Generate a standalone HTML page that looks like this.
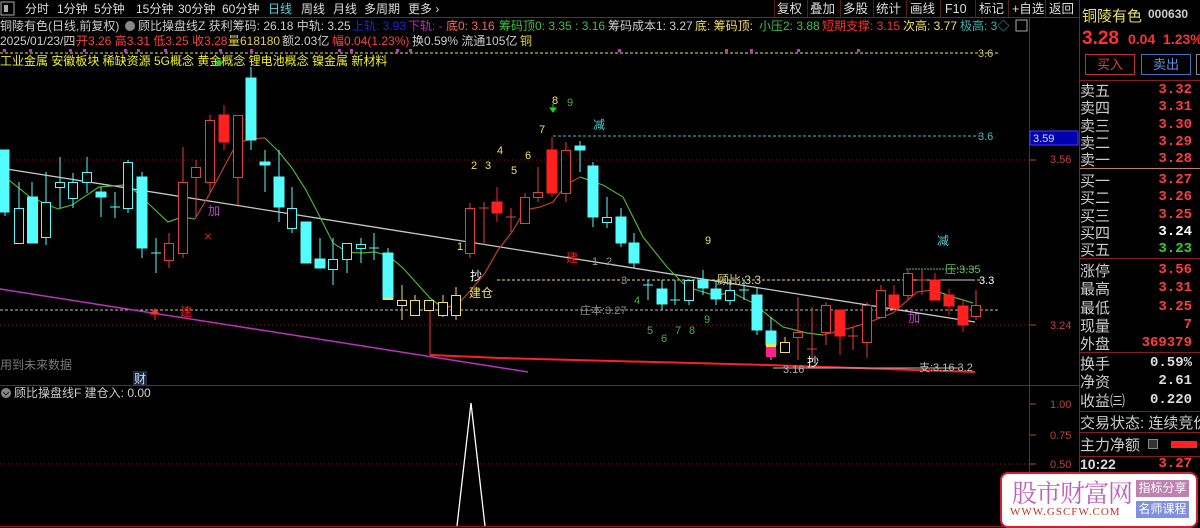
<!DOCTYPE html>
<html><head><meta charset="utf-8"><style>
*{margin:0;padding:0;box-sizing:border-box}
body{width:1200px;height:528px;background:#000;overflow:hidden;position:relative;font-family:"Liberation Sans","Noto Sans CJK SC",sans-serif;color:#ccc}
.a{position:absolute;white-space:nowrap}
svg{position:absolute;left:0;top:0}
.rp{position:absolute;left:1080px;font-size:15px;color:#ccc;white-space:nowrap}
.rv{position:absolute;right:8px;font-size:14px;font-weight:bold;color:#ff3c3c;font-family:"Liberation Mono",monospace}
</style></head><body>
<svg width="1200" height="528" font-family="Liberation Sans, Noto Sans CJK SC, sans-serif">
<line x1="0" y1="17.5" x2="1079" y2="17.5" stroke="#8b1a1a"/>
<line x1="1029.5" y1="17" x2="1029.5" y2="528" stroke="#8b1a1a"/>
<line x1="1079.5" y1="0" x2="1079.5" y2="528" stroke="#8b1a1a"/>
<line x1="0" y1="385.5" x2="1029" y2="385.5" stroke="#8b1a1a"/>
<line x1="0" y1="526.5" x2="1029" y2="526.5" stroke="#8b1a1a"/>
<line x1="1029" y1="385.5" x2="1079" y2="385.5" stroke="#8b1a1a"/>
<g stroke="#8b1a1a" stroke-dasharray="1 3">
<line x1="0" y1="160" x2="1029" y2="160"/><line x1="0" y1="325" x2="1029" y2="325"/><line x1="0" y1="464" x2="1029" y2="464"/>
</g>
<line x1="0" y1="53" x2="1000" y2="53" stroke="#e8e070" stroke-dasharray="3 2"/>
<g fill="#e020e0"><rect x="3" y="49" width="3" height="3"/><rect x="29" y="49" width="3" height="3"/><rect x="69" y="49" width="3" height="3"/><rect x="83" y="49" width="3" height="3"/><rect x="124" y="49" width="3" height="3"/><rect x="137" y="49" width="3" height="3"/><rect x="164" y="49" width="3" height="3"/><rect x="219" y="49" width="3" height="3"/><rect x="250" y="49" width="3" height="3"/><rect x="338" y="49" width="3" height="3"/><rect x="350" y="49" width="3" height="3"/><rect x="396" y="49" width="3" height="3"/><rect x="409" y="49" width="3" height="3"/><rect x="618" y="49" width="3" height="3"/><rect x="725" y="49" width="3" height="3"/><rect x="750" y="49" width="3" height="3"/><rect x="797" y="49" width="3" height="3"/><rect x="857" y="49" width="3" height="3"/></g>
<line x1="553" y1="136" x2="980" y2="136" stroke="#40c0c0" stroke-dasharray="3 2"/>
<line x1="497" y1="280" x2="980" y2="280" stroke="#e8e070" stroke-dasharray="3 2"/>
<line x1="0" y1="310" x2="1000" y2="310" stroke="#bbb" stroke-dasharray="3 2"/>
<line x1="906" y1="269" x2="975" y2="269" stroke="#60c060" stroke-dasharray="2 1"/>
<line x1="906" y1="280" x2="975" y2="280" stroke="#ccc"/>
<line x1="0" y1="168" x2="975" y2="322" stroke="#c8c8c8" stroke-width="1.3"/>
<line x1="0" y1="289" x2="528" y2="372" stroke="#c030c0" stroke-width="1.5"/>
<polyline points="430,355 500,358 767,365 975,372" fill="none" stroke="#ff2020" stroke-width="2"/>
<line x1="430" y1="310" x2="430" y2="355" stroke="#ff3030"/>
<polyline fill="none" stroke="#50b030" stroke-width="1.2" points="0,173 30,197 58,209 72,205 99,187 125,185 135,191 168,222 182,217 195,219"/>
<polyline fill="none" stroke="#c0402a" stroke-width="1.2" points="195,219 209,195 237,143 251,139 265,138"/>
<polyline fill="none" stroke="#50b030" stroke-width="1.2" points="265,138 279,152 292,168 306,190 320,217 333,243 347,252 361,253 375,252 389,256 403,268 430,298 443,308"/>
<polyline fill="none" stroke="#c0402a" stroke-width="1.2" points="443,308 457,305 471,290 485,273 498,250 512,232 525,210 540,207 553,202 566,185 580,177"/>
<polyline fill="none" stroke="#50b030" stroke-width="1.2" points="580,177 603,185 623,197 643,237 667,267 687,287 713,295 733,293 753,303 770,317 783,327 807,333 823,335"/>
<polyline fill="none" stroke="#c0402a" stroke-width="1.2" points="823,335 850,328 867,323 893,313 917,292 933,290"/>
<polyline fill="none" stroke="#50b030" stroke-width="1.2" points="933,290 953,297 973,303"/>
<g stroke-width="1">
<g stroke="#54fcfc" fill="#54fcfc">
<line x1="5" y1="150" x2="5" y2="216"/><rect x="0" y="150" width="9" height="62"/>
<line x1="32" y1="182" x2="32" y2="243"/><rect x="27.5" y="197" width="10" height="46"/>
<line x1="101" y1="187" x2="101" y2="217"/><rect x="96" y="192" width="10" height="5"/>
<line x1="142" y1="172" x2="142" y2="258"/><rect x="137" y="177" width="10" height="71"/>
<line x1="251" y1="67" x2="251" y2="150"/><rect x="246" y="78" width="10" height="62"/>
<line x1="265" y1="150" x2="265" y2="192"/><rect x="260" y="162" width="10" height="3"/>
<line x1="279" y1="150" x2="279" y2="222"/><rect x="274" y="177" width="10" height="30"/>
<line x1="306" y1="222" x2="306" y2="263"/><rect x="301" y="222" width="10" height="41"/>
<line x1="320" y1="238" x2="320" y2="268"/><rect x="315" y="259" width="10" height="9"/>
<line x1="388" y1="248" x2="388" y2="300"/><rect x="383" y="253" width="10" height="46"/>
<line x1="580" y1="141" x2="580" y2="172"/><rect x="575" y="146" width="10" height="4"/>
<line x1="593" y1="162" x2="593" y2="227"/><rect x="588" y="166" width="10" height="51"/>
<line x1="621" y1="208" x2="621" y2="247"/><rect x="616" y="217" width="10" height="26"/>
<line x1="634" y1="233" x2="634" y2="268"/><rect x="629" y="243" width="10" height="20"/>
<line x1="662" y1="280" x2="662" y2="310"/><rect x="657" y="289" width="10" height="15"/>
<line x1="703" y1="270" x2="703" y2="295"/><rect x="698" y="280" width="10" height="8"/>
<line x1="716" y1="280" x2="716" y2="305"/><rect x="711" y="289" width="10" height="10"/>
<line x1="757" y1="287" x2="757" y2="335"/><rect x="752" y="295" width="10" height="35"/>
<line x1="771" y1="317" x2="771" y2="360"/><rect x="766" y="331" width="10" height="14"/>
</g>
<rect x="383" y="298" width="10" height="2" fill="#f0e060"/>
<rect x="766" y="344" width="10" height="3" fill="#f0e060"/>
<rect x="766" y="347" width="10" height="10" fill="#ff2090"/>
<g stroke="#54fcfc" fill="#000">
<line x1="19" y1="182" x2="19" y2="243"/><rect x="14.5" y="208.5" width="9" height="35"/>
<line x1="46" y1="172" x2="46" y2="245"/><rect x="41.5" y="202.5" width="9" height="35"/>
<line x1="60" y1="157" x2="60" y2="208"/><rect x="55.5" y="182.5" width="9" height="5"/>
<line x1="73" y1="173" x2="73" y2="208"/><rect x="68.5" y="182.5" width="9" height="16"/>
<line x1="87" y1="157" x2="87" y2="193"/><rect x="82.5" y="172.5" width="9" height="10"/>
<line x1="115" y1="192" x2="115" y2="218"/><line x1="110" y1="207" x2="120" y2="207"/>
<line x1="128" y1="160" x2="128" y2="213"/><rect x="123.5" y="162.5" width="9" height="46"/>
<line x1="156" y1="238" x2="156" y2="273"/><line x1="151" y1="253" x2="161" y2="253"/>
<line x1="292" y1="187" x2="292" y2="233"/><rect x="287.5" y="208.5" width="9" height="20"/>
<line x1="333" y1="238" x2="333" y2="285"/><rect x="328.5" y="259.5" width="9" height="10"/>
<line x1="347" y1="243" x2="347" y2="273"/><rect x="342.5" y="243.5" width="9" height="16"/>
<line x1="361" y1="238" x2="361" y2="263"/><rect x="356.5" y="244.5" width="9" height="4"/>
<line x1="374" y1="233" x2="374" y2="260"/><line x1="369" y1="248" x2="379" y2="248"/>
<line x1="607" y1="197" x2="607" y2="228"/><rect x="602.5" y="217.5" width="9" height="5"/>
<line x1="648" y1="280" x2="648" y2="300"/><line x1="643" y1="285" x2="653" y2="285"/>
<line x1="675" y1="280" x2="675" y2="305"/><line x1="670" y1="300" x2="680" y2="300"/>
<line x1="689" y1="280" x2="689" y2="305"/><rect x="684.5" y="280.5" width="9" height="20"/>
<line x1="730" y1="280" x2="730" y2="305"/><rect x="725.5" y="290.5" width="9" height="10"/>
<line x1="744" y1="280" x2="744" y2="300"/><line x1="739" y1="290" x2="749" y2="290"/>
</g>
<g stroke="#f0e060" fill="#000">
<line x1="402" y1="285" x2="402" y2="320"/><rect x="397.5" y="300.5" width="9" height="5"/>
<line x1="415" y1="295" x2="415" y2="315"/><rect x="410.5" y="300.5" width="9" height="15"/>
<rect x="424.5" y="300.5" width="9" height="10"/>
<line x1="443" y1="295" x2="443" y2="317"/><rect x="438.5" y="302.5" width="9" height="13"/>
<line x1="456" y1="287" x2="456" y2="320"/><rect x="451.5" y="295.5" width="9" height="20"/>
<line x1="785" y1="337" x2="785" y2="353"/><rect x="780.5" y="342.5" width="9" height="10"/>
</g>
<g stroke="#e04040" fill="#000">
<line x1="169" y1="233" x2="169" y2="268"/><rect x="164.5" y="243.5" width="9" height="17"/>
<line x1="183" y1="147" x2="183" y2="258"/><rect x="178.5" y="182.5" width="9" height="71"/>
<line x1="196" y1="160" x2="196" y2="217"/><rect x="191.5" y="167.5" width="9" height="10"/>
<line x1="210" y1="115" x2="210" y2="192"/><rect x="205.5" y="120.5" width="9" height="62"/>
<line x1="238" y1="115" x2="238" y2="205"/><rect x="233.5" y="115.5" width="9" height="62"/>
<line x1="470" y1="203" x2="470" y2="258"/><rect x="465.5" y="208.5" width="9" height="45"/>
<line x1="484" y1="202" x2="484" y2="245"/><line x1="479" y1="208" x2="489" y2="208"/>
<line x1="511" y1="208" x2="511" y2="232"/><line x1="506" y1="217" x2="516" y2="217"/>
<line x1="525" y1="193" x2="525" y2="223"/><rect x="520.5" y="197.5" width="9" height="26"/>
<line x1="538" y1="167" x2="538" y2="202"/><rect x="533.5" y="192.5" width="9" height="5"/>
<line x1="566" y1="142" x2="566" y2="202"/><rect x="561.5" y="150.5" width="9" height="43"/>
<line x1="798" y1="297" x2="798" y2="360"/><rect x="793.5" y="332.5" width="9" height="5"/>
<line x1="812" y1="307" x2="812" y2="360"/><line x1="807" y1="349" x2="817" y2="349"/>
<line x1="826" y1="302" x2="826" y2="345"/><rect x="821.5" y="305.5" width="9" height="27"/>
<line x1="853" y1="327" x2="853" y2="350"/><line x1="848" y1="336" x2="858" y2="336"/>
<line x1="867" y1="302" x2="867" y2="358"/><rect x="862.5" y="305.5" width="9" height="37"/>
<line x1="881" y1="285" x2="881" y2="318"/><rect x="876.5" y="290.5" width="9" height="27"/>
<line x1="908" y1="269" x2="908" y2="300"/><rect x="903.5" y="273.5" width="9" height="22"/>
<line x1="922" y1="270" x2="922" y2="295"/><line x1="917" y1="280" x2="927" y2="280"/>
<line x1="976" y1="290" x2="976" y2="320"/><rect x="971.5" y="305.5" width="9" height="11"/>
</g>
<g stroke="#ff2020" fill="#ff2020">
<line x1="224" y1="105" x2="224" y2="150"/><rect x="219" y="115" width="10" height="27"/>
<line x1="497" y1="187" x2="497" y2="222"/><rect x="492" y="202" width="10" height="11"/>
<line x1="552" y1="137" x2="552" y2="197"/><rect x="547" y="150" width="10" height="43"/>
<line x1="840" y1="310" x2="840" y2="355"/><rect x="835" y="310" width="10" height="26"/>
<line x1="894" y1="285" x2="894" y2="310"/><rect x="889" y="295" width="10" height="13"/>
<line x1="935" y1="273" x2="935" y2="300"/><rect x="930" y="280" width="10" height="20"/>
<line x1="949" y1="289" x2="949" y2="315"/><rect x="944" y="295" width="10" height="11"/>
<line x1="963" y1="300" x2="963" y2="332"/><rect x="958" y="306" width="10" height="19"/>
</g>
</g>
<g font-size="11" fill="#f0e060">
<text x="457" y="250">1</text><text x="471" y="169">2</text><text x="485" y="169">3</text><text x="497" y="154">4</text><text x="511" y="174">5</text><text x="525" y="159">6</text><text x="539" y="133">7</text><text x="552" y="104">8</text><text x="705" y="244">9</text>
</g>
<g font-size="11" fill="#50b040"><text x="567" y="106">9</text><text x="634" y="304">4</text><text x="647" y="334">5</text><text x="661" y="342">6</text><text x="675" y="334">7</text><text x="689" y="334">8</text><text x="704" y="323">9</text></g>
<g font-size="11" fill="#999"><text x="592" y="265">1</text><text x="606" y="265">2</text><text x="621" y="284">3</text></g>
<path d="M553 104 v5 M550 108 L553 112 L556 108 Z" stroke="#20d020" fill="#20d020"/>
<path d="M155 310 v10 M151 314 L155 309 L159 314 Z" stroke="#ff3030" fill="#ff3030"/>
<text x="593" y="129" font-size="12" fill="#50d0d0">减</text>
<text x="937" y="245" font-size="12" fill="#50d0d0">减</text>
<text x="208" y="215" font-size="12" fill="#c040d0">加</text>
<text x="908" y="322" font-size="12" fill="#c040d0">加</text>
<text x="204" y="241" font-size="14" fill="#e02020">×</text>
<text x="180" y="316" font-size="12" fill="#e02020">建</text>
<text x="566" y="262" font-size="12" fill="#e02020">建</text>
<text x="470" y="280" font-size="12" fill="#fff">抄</text>
<text x="469" y="297" font-size="12" fill="#f0e060">建仓</text>
<text x="807" y="366" font-size="12" fill="#fff">抄</text>
<text x="717" y="284" font-size="12" fill="#d8d070">顾比:3.3</text>
<text x="580" y="314" font-size="11" fill="#888">庄本:3.27</text>
<text x="783" y="373" font-size="11" fill="#aaa">3.16</text>
<line x1="773" y1="368" x2="960" y2="368" stroke="#bbb"/>
<text x="919" y="371" font-size="11" fill="#bbb">支:3.16 3.2</text>
<text x="945" y="273" font-size="11" fill="#60c060">压:3.35</text>
<text x="979" y="284" font-size="11" fill="#fff">3.3</text>
<text x="978" y="140" font-size="11" fill="#40c0c0">3.6</text>
<text x="978" y="57" font-size="11" fill="#c8c070">3.6</text>
<text x="0" y="369" font-size="12" fill="#777">用到未来数据</text>
<rect x="133" y="371" width="14" height="14" fill="#1a2a40"/>
<text x="134" y="383" font-size="12" fill="#cde">财</text>
<rect x="1030" y="131" width="48" height="14" fill="#0000b0" stroke="#4040ff"/>
<text x="1033" y="142" font-size="11" fill="#ddd">3.59</text>
<g font-size="11" fill="#c04040">
<text x="1050" y="163">3.56</text><text x="1050" y="329">3.24</text><text x="1050" y="408">1.00</text><text x="1050" y="439">0.75</text><text x="1050" y="468">0.50</text>
</g>
<g stroke="#c04040"><line x1="1030" y1="160" x2="1036" y2="160"/><line x1="1030" y1="325" x2="1036" y2="325"/><line x1="1030" y1="404" x2="1036" y2="404"/><line x1="1030" y1="435" x2="1036" y2="435"/><line x1="1030" y1="464" x2="1036" y2="464"/></g>
<polyline points="457,526 471,403 485,526" fill="none" stroke="#fff" stroke-width="1.3"/>
<circle cx="6" cy="393" r="5" fill="#888"/><path d="M3 392 L6 395 L9 392" stroke="#222" fill="none"/>
<text x="14" y="397" font-size="12" fill="#ccc">顾比操盘线F  建仓入: 0.00</text>
<rect x="1" y="2" width="13" height="13" fill="none" stroke="#aaa"/><rect x="4" y="5" width="4" height="7" fill="#aaa"/>
<g font-size="12" fill="#ddd">
<text x="25" y="13">分时</text><text x="57" y="13">1分钟</text><text x="94" y="13">5分钟</text><text x="136" y="13">15分钟</text><text x="178" y="13">30分钟</text><text x="222" y="13">60分钟</text>
<text x="268" y="13" fill="#50d8e8">日线</text><text x="301" y="13">周线</text><text x="333" y="13">月线</text><text x="364" y="13">多周期</text><text x="408" y="13">更多 ›</text>
</g>
<g font-size="12.5" fill="#ddd">
<text x="777" y="13">复权</text><text x="810" y="13">叠加</text><text x="843" y="13">多股</text><text x="876" y="13">统计</text><text x="910" y="13">画线</text><text x="945" y="13">F10</text><text x="979" y="13">标记</text><text x="1012" y="13">+自选</text><text x="1049" y="13">返回</text>
</g>
<g stroke="#5a1a1a"><line x1="774.5" y1="0" x2="774.5" y2="17"/><line x1="807.5" y1="0" x2="807.5" y2="17"/><line x1="840.5" y1="0" x2="840.5" y2="17"/><line x1="873.5" y1="0" x2="873.5" y2="17"/><line x1="906.5" y1="0" x2="906.5" y2="17"/><line x1="940.5" y1="0" x2="940.5" y2="17"/><line x1="975.5" y1="0" x2="975.5" y2="17"/><line x1="1008.5" y1="0" x2="1008.5" y2="17"/><line x1="1045.5" y1="0" x2="1045.5" y2="17"/></g>
<g font-size="12">
<text x="0" y="30" fill="#ccc">铜陵有色(日线,前复权)</text>
<circle cx="130" cy="26" r="5" fill="#888"/>
<text x="138" y="30" fill="#ccc">顾比操盘线Z  获利筹码: 26.18  中轨: 3.25</text>
<text x="352" y="30" fill="#2020e0">上轨: 3.93</text>
<text x="408" y="30" fill="#d020d0">下轨: -</text>
<text x="446" y="30" fill="#ff6060">底0: 3.16</text>
<text x="499" y="30" fill="#40c040">筹码顶0: 3.35 : 3.16</text>
<text x="608" y="30" fill="#ccc">筹码成本1: 3.27</text>
<text x="695" y="30" fill="#f0e060">底: 筹码顶:</text>
<text x="759" y="30" fill="#40c040">小压2: 3.88</text>
<text x="822" y="30" fill="#ff3030">短期支撑: 3.15</text>
<text x="903" y="30" fill="#f0e060">次高: 3.77</text>
<text x="960" y="30" fill="#40b0b0">极高: 3◇</text>
<rect x="1016" y="20" width="11" height="11" fill="none" stroke="#aaa"/>
<text x="0" y="45" fill="#ccc">2025/01/23/四</text>
<text x="76" y="45" fill="#ff4040">开3.26 高3.31 低3.25 收3.28</text>
<text x="228" y="45" fill="#e0d040">量618180</text>
<text x="282" y="45" fill="#ccc">额2.03亿</text>
<text x="332" y="45" fill="#ff4040">幅0.04(1.23%)</text>
<text x="412" y="45" fill="#ccc">换0.59% 流通105亿</text>
<text x="520" y="45" fill="#e0d040">铜</text>
<text x="0" y="65" fill="#f0f020">工业金属 安徽板块 稀缺资源 5G概念 黄金概念 锂电池概念 镍金属 新材料</text>
</g>
<circle cx="219" cy="63" r="3" fill="#20d020"/>
</svg>

<div class="a" style="left:1082px;top:5px;font-size:15px;color:#e8e060">铜陵有色</div>
<div class="a" style="left:1148px;top:7px;font-size:12px;font-weight:bold;color:#ccc">000630</div>
<div class="a" style="left:1082px;top:28px;font-size:19px;font-weight:bold;color:#ff3030">3.28</div>
<div class="a" style="left:1128px;top:31px;font-size:14px;font-weight:bold;color:#ff3030">0.04&nbsp; 1.23%</div>
<div class="a" style="left:1085px;top:54px;width:50px;height:21px;border:1px solid #c03030;color:#e04040;font-size:13px;text-align:center;line-height:19px">买入</div>
<div class="a" style="left:1141px;top:54px;width:50px;height:21px;border:1px solid #4070c0;color:#6090e0;font-size:13px;text-align:center;line-height:19px">卖出</div>
<div class="a" style="left:1196px;top:54px;width:6px;height:21px;border:1px solid #888"></div>
<div class="a" style="left:1080px;top:80px;width:120px;height:1px;background:#8b1a1a"></div>
<div class="a" style="left:1080px;top:168px;width:120px;height:1px;background:#c08060"></div>
<div class="a" style="left:1080px;top:258px;width:120px;height:1px;background:#8b1a1a"></div>
<div class="a" style="left:1080px;top:352px;width:120px;height:1px;background:#8b1a1a"></div>
<div class="a" style="left:1080px;top:411px;width:120px;height:1px;background:#8b1a1a"></div>
<div class="a" style="left:1080px;top:432px;width:120px;height:1px;background:#8b1a1a"></div>
<div class="a" style="left:1080px;top:456px;width:120px;height:1px;background:#8b1a1a"></div>

<div class="rp" style="top:80px">卖五</div><div class="rv" style="top:82px">3.32</div>
<div class="rp" style="top:97px">卖四</div><div class="rv" style="top:99px">3.31</div>
<div class="rp" style="top:115px">卖三</div><div class="rv" style="top:117px">3.30</div>
<div class="rp" style="top:132px">卖二</div><div class="rv" style="top:134px">3.29</div>
<div class="rp" style="top:149px">卖一</div><div class="rv" style="top:151px">3.28</div>
<div class="rp" style="top:170px">买一</div><div class="rv" style="top:172px">3.27</div>
<div class="rp" style="top:187px">买二</div><div class="rv" style="top:189px">3.26</div>
<div class="rp" style="top:205px">买三</div><div class="rv" style="top:207px">3.25</div>
<div class="rp" style="top:222px">买四</div><div class="rv" style="top:224px;color:#fff">3.24</div>
<div class="rp" style="top:239px">买五</div><div class="rv" style="top:241px;color:#30d030">3.23</div>
<div class="rp" style="top:260px">涨停</div><div class="rv" style="top:262px">3.56</div>
<div class="rp" style="top:278px">最高</div><div class="rv" style="top:280px">3.31</div>
<div class="rp" style="top:297px">最低</div><div class="rv" style="top:299px">3.25</div>
<div class="rp" style="top:315px">现量</div><div class="rv" style="top:317px">7</div>
<div class="rp" style="top:333px">外盘</div><div class="rv" style="top:335px">369379</div>
<div class="rp" style="top:353px">换手</div><div class="rv" style="top:355px;color:#ddd">0.59%</div>
<div class="rp" style="top:371px">净资</div><div class="rv" style="top:373px;color:#ddd">2.61</div>
<div class="rp" style="top:390px">收益㈢</div><div class="rv" style="top:392px;color:#ddd">0.220</div>
<div class="rp" style="top:412px">交易状态: 连续竞价</div>
<div class="rp" style="top:434px">主力净额</div>
<div class="a" style="left:1148px;top:439px;width:10px;height:10px;border:1px solid #888;background:#333"></div>
<div class="a" style="left:1171px;top:441px;width:26px;height:7px;background:#ff2020"></div>
<div class="rp" style="top:456px;font-weight:bold;font-size:14px;color:#ddd">10:22</div><div class="rv" style="top:456px">3.27</div>

<div class="a" style="left:1000px;top:472px;width:198px;height:56px;background:#fff;border:2px solid #d02030;border-radius:8px"></div>
<div class="a" style="left:1012px;top:474px;font-size:25px;color:#c060c0;font-family:'Noto Serif CJK SC',serif;letter-spacing:-1px">股市财富网</div>
<div class="a" style="left:1010px;top:506px;font-size:11px;color:#c03030;font-family:'Liberation Serif',serif;letter-spacing:1px">WWW.GSCFW.COM</div>
<div class="a" style="left:1136px;top:480px;width:53px;height:17px;background:#c080b0;color:#fff;font-size:12px;text-align:center;line-height:17px">指标分享</div>
<div class="a" style="left:1136px;top:501px;width:53px;height:17px;background:#8090e0;color:#fff;font-size:12px;text-align:center;line-height:17px">名师课程</div>
</body></html>
